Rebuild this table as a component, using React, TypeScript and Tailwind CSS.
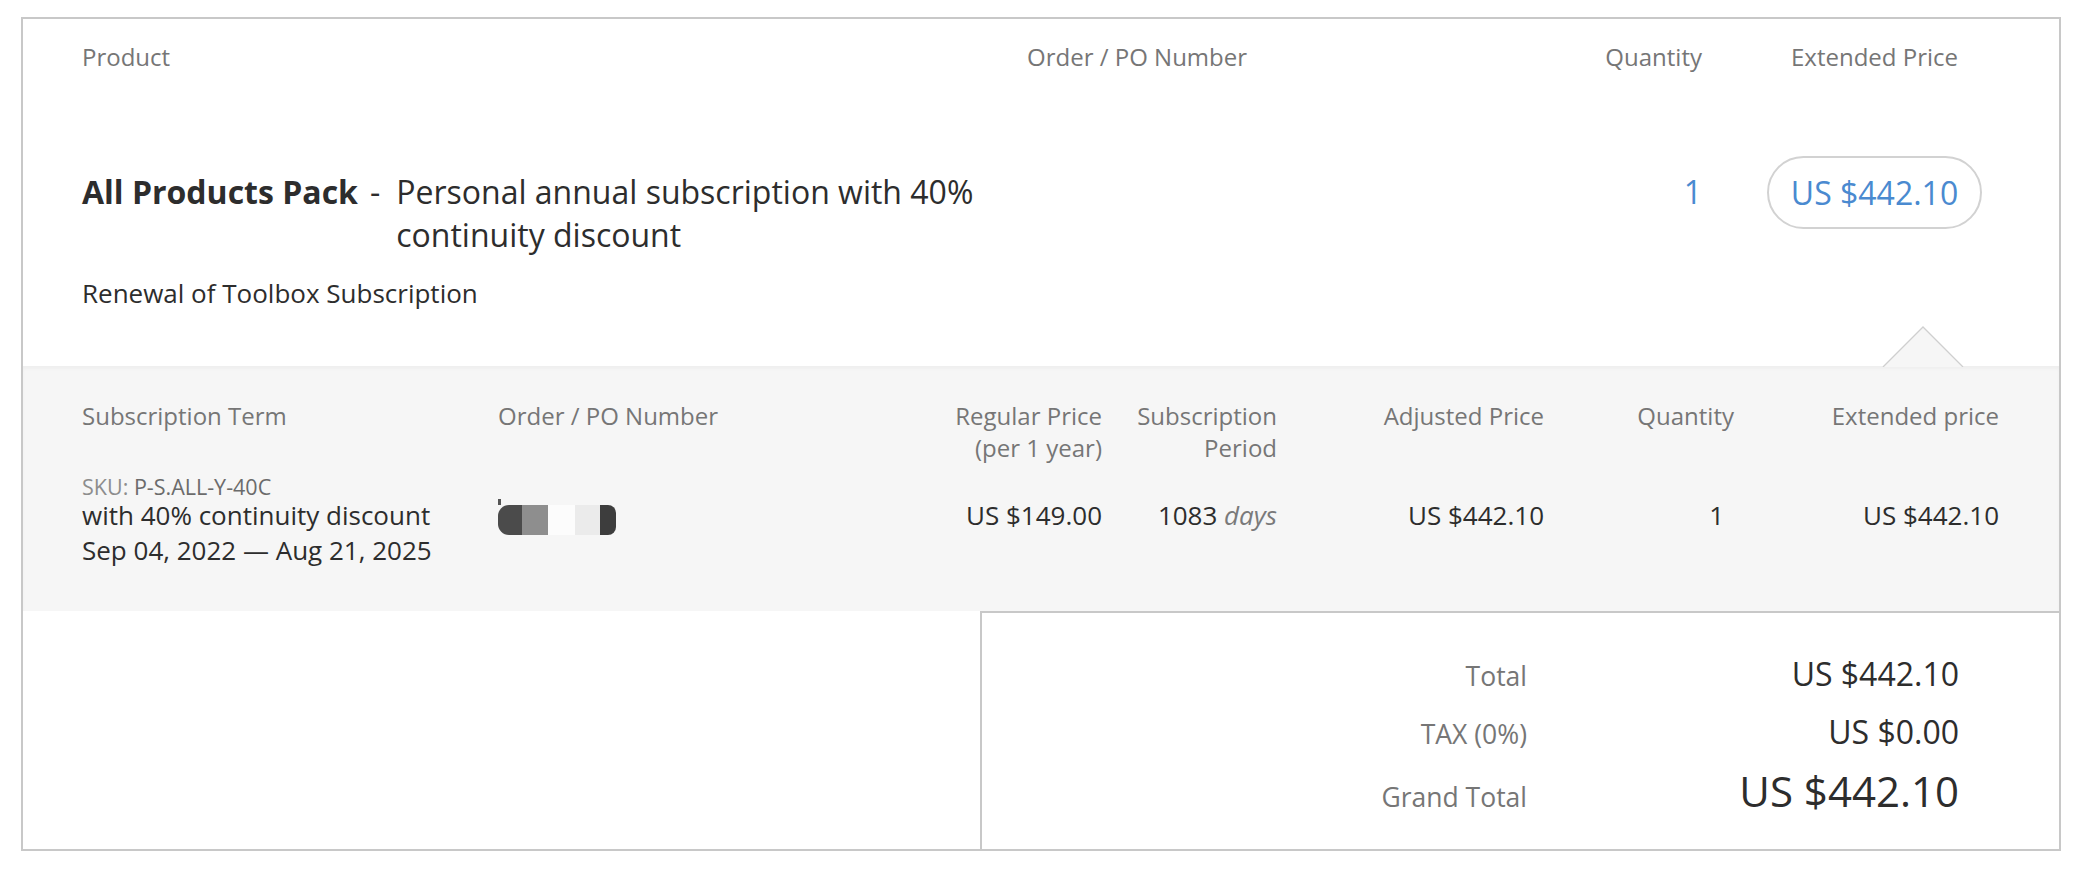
export default function App() {
  return (
    <div className="min-h-[872px] bg-white pl-[21px] pt-[17px] font-['Open_Sans',sans-serif]">
      <div className="w-[2040px] border-2 border-[#c8c8c8] bg-white">
        {/* product summary */}
        <div className="pb-[55px] pl-[59px] pr-[77px] pt-[22px]">
          <div className="flex text-[24px] leading-[32px] text-[#767676]">
            <div className="w-[945px]">Product</div>
            <div className="w-[533px]">Order / PO Number</div>
            <div className="w-[142px] text-right">Quantity</div>
            <div className="w-[65px]" />
            <div className="w-[215px] text-center">Extended Price</div>
          </div>
          <div className="mt-[83px] flex items-start">
            <div className="w-[945px] pt-[14px] text-[#2d2d2d]">
              <div className="flex items-start text-[32px] leading-[43px]">
                <span className="font-bold">All Products Pack</span>
                <span className="ml-[12px] mr-[16px]">-</span>
                <span className="w-[600px]">Personal annual subscription with 40% continuity discount</span>
              </div>
              <div className="mt-[19px] text-[26px] leading-[36px]">Renewal of Toolbox Subscription</div>
            </div>
            <div className="w-[533px]" />
            <div className="w-[142px] pt-[14px] text-right text-[32px] leading-[43px] text-[#4a8ad0]">1</div>
            <div className="w-[65px]" />
            <div className="flex h-[73px] w-[215px] items-center justify-center rounded-full border-2 border-[#d2d2d2] text-[32px] text-[#4a8ad0]">
              US $442.10
            </div>
          </div>
        </div>

        {/* subscription details */}
        <div className="relative bg-[#f6f6f6] pb-[43px] pl-[59px] pr-[60px] pt-[34px] shadow-[inset_0_3px_3px_rgba(0,0,0,0.03)]">
          <svg className="absolute left-[1859px] top-[-40px]" width="82" height="41" viewBox="0 0 82 41">
            <polygon points="1,41 41,1 81,41" fill="#f6f6f6" />
            <path d="M1 41 L41 1 L81 41" fill="none" stroke="#cfcfcf" strokeWidth="1.3" />
          </svg>
          <div className="flex text-[24px] leading-[32px] text-[#767676]">
            <div className="w-[416px]">Subscription Term</div>
            <div className="w-[402px]">Order / PO Number</div>
            <div className="w-[202px] text-right">
              Regular Price
              <br />
              (per 1 year)
            </div>
            <div className="w-[175px] text-right">
              Subscription
              <br />
              Period
            </div>
            <div className="w-[267px] text-right">Adjusted Price</div>
            <div className="w-[190px] text-right">Quantity</div>
            <div className="w-[265px] text-right">Extended price</div>
          </div>
          <div className="mt-[12px] flex text-[26px] leading-[35px] text-[#2d2d2d]">
            <div className="w-[416px]">
              <div className="text-[21.5px] leading-[22px] text-[#8d8d8d]">
                SKU: <span className="text-[#6b6b6b]">P-S.ALL-Y-40C</span>
              </div>
              <div>with 40% continuity discount</div>
              <div>Sep 04, 2022 — Aug 21, 2025</div>
            </div>
            <div className="w-[402px] pt-[29px]">
              <div className="relative flex h-[30px]">
                <div className="absolute left-0 top-[-6px] h-[6px] w-[3px] bg-[#555]" />
                <div className="w-[24px] rounded-l-[11px] bg-[#4b4b4b]" />
                <div className="w-[26px] bg-[#8e8e8e]" />
                <div className="w-[27px] bg-[#fcfcfc]" />
                <div className="w-[25px] bg-[#ebebeb]" />
                <div className="w-[16px] rounded-r-[8px] bg-[#3d3d3d]" />
              </div>
            </div>
            <div className="w-[202px] pt-[22px] text-right">US $149.00</div>
            <div className="w-[175px] pt-[22px] text-right">
              1083 <span className="italic text-[#7a7a7a]">days</span>
            </div>
            <div className="w-[267px] pt-[22px] text-right">US $442.10</div>
            <div className="w-[190px] pr-[10px] pt-[22px] text-right">1</div>
            <div className="w-[265px] pt-[22px] text-right">US $442.10</div>
          </div>
        </div>

        {/* totals */}
        <div className="flex h-[238px]">
          <div className="flex-1" />
          <div className="w-[1079px] border-l-2 border-t-2 border-[#c8c8c8] pr-[100px] pt-[33px]">
            <div className="flex items-baseline">
              <div className="w-[545px] text-right text-[26.5px] leading-[56px] text-[#767676]">Total</div>
              <div className="w-[432px] text-right text-[32px] leading-[56px] text-[#2d2d2d]">US $442.10</div>
            </div>
            <div className="flex items-baseline">
              <div className="w-[545px] text-right text-[26.5px] leading-[56px] text-[#767676]">TAX (0%)</div>
              <div className="w-[432px] text-right text-[32px] leading-[56px] text-[#2d2d2d]">US $0.00</div>
            </div>
            <div className="flex items-baseline">
              <div className="w-[545px] text-right text-[26.5px] leading-[60px] text-[#767676]">Grand Total</div>
              <div className="w-[432px] text-right text-[42px] leading-[57px] text-[#2d2d2d]">US $442.10</div>
            </div>
          </div>
        </div>
      </div>
    </div>
  )
}
